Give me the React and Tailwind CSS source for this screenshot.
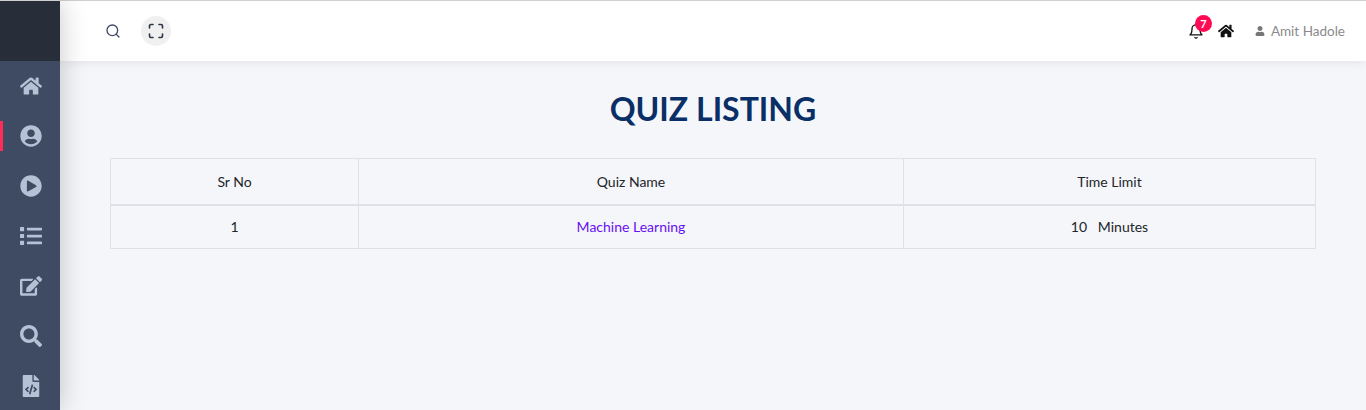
import React from "react";
import { FaHome, FaUserCircle, FaPlayCircle, FaList, FaEdit, FaSearch, FaFileCode, FaUser } from "react-icons/fa";
import { FiSearch, FiBell } from "react-icons/fi";

const nav = [FaHome, FaUserCircle, FaPlayCircle, FaList, FaEdit, FaSearch, FaFileCode];

export default function App() {
  return (
    <div className="flex h-[410px] w-[1366px] overflow-hidden bg-[#f5f6fa] text-[14px] text-[#212529]" style={{ fontFamily: '"Lato", "Open Sans", sans-serif' }}>
      <aside className="z-20 flex h-full w-[60px] shrink-0 flex-col bg-[#3f4a63] shadow-[0_0_28px_rgba(0,0,0,0.22)]">
        <div className="h-[61px] shrink-0 border-t border-[#cfcfcf] bg-[#282d3a]" />
        <nav className="flex flex-col">
          {nav.map((Icon, i) => (
            <div key={i} className={`flex h-[50px] items-center pl-[20px] ${i === 1 ? "relative" : ""}`}>
              {i === 1 && <span className="absolute left-0 top-[10px] h-[30px] w-[3px] bg-[#ff2d55]" />}
              <Icon className="text-[22px] text-[#b5c2d6]" />
            </div>
          ))}
        </nav>
      </aside>
      <div className="flex min-w-0 flex-1 flex-col">
        <header className="z-10 flex h-[61px] shrink-0 items-center justify-between border-t border-[#cfcfcf] bg-white pl-[45px] pr-[21px] shadow-[0_2px_10px_rgba(0,0,0,0.07)]">
          <div className="flex items-center gap-[20px]">
            <FiSearch className="text-[16px] text-[#3f4a63]" />
            <div className="flex h-[30px] w-[30px] items-center justify-center rounded-full bg-[#f0f0f0]">
              <svg width="16" height="16" viewBox="0 0 16 16" fill="none" stroke="#2c3548" strokeWidth="1.6" strokeLinecap="round">
                <path d="M1.5 5V3a1.5 1.5 0 0 1 1.5-1.5h2M11 1.5h2A1.5 1.5 0 0 1 14.500 3v2M14.500 11v2a1.500 1.500 0 0 1-1.500 1.500h-2M5 14.500H3A1.500 1.500 0 0 1 1.500 13v-2" />
              </svg>
            </div>
          </div>
          <div className="flex items-center">
            <div className="relative mr-[14px] flex h-[18px] w-[16px] items-center justify-center">
              <FiBell className="text-[17px] text-[#111]" />
              <span className="absolute left-[7px] top-[-7px] flex h-[17px] w-[17px] items-center justify-center rounded-full bg-[#ff0a54] text-[11px] font-bold leading-none text-white">7</span>
            </div>
            <FaHome className="mr-[21px] text-[16px] text-[#111]" />
            <FaUser className="mr-[6px] text-[10px] text-[#777]" />
            <span className="text-[13.500px] text-[#8a8a8a]">Amit Hadole</span>
          </div>
        </header>
        <main className="flex-1 pl-[50px] pr-[50px]">
          <h1 className="mt-[27px] mb-[28px] text-center text-[32px] font-bold leading-[42px] text-[#0a2f66]">QUIZ LISTING</h1>
          <table className="w-[1206px] table-fixed border-collapse text-center">
            <thead>
              <tr className="h-[46px]">
                <th className="w-[248px] border border-b-2 border-[#dee2e6] font-normal">Sr No</th>
                <th className="w-[545px] border border-b-2 border-[#dee2e6] font-normal">Quiz Name</th>
                <th className="border border-b-2 border-[#dee2e6] font-normal">Time Limit</th>
              </tr>
            </thead>
            <tbody>
              <tr className="h-[44px]">
                <td className="border border-[#dee2e6]">1</td>
                <td className="border border-[#dee2e6] text-[#6610f2]">Machine Learning</td>
                <td className="border border-[#dee2e6] whitespace-pre">10   Minutes</td>
              </tr>
            </tbody>
          </table>
        </main>
      </div>
    </div>
  );
}
